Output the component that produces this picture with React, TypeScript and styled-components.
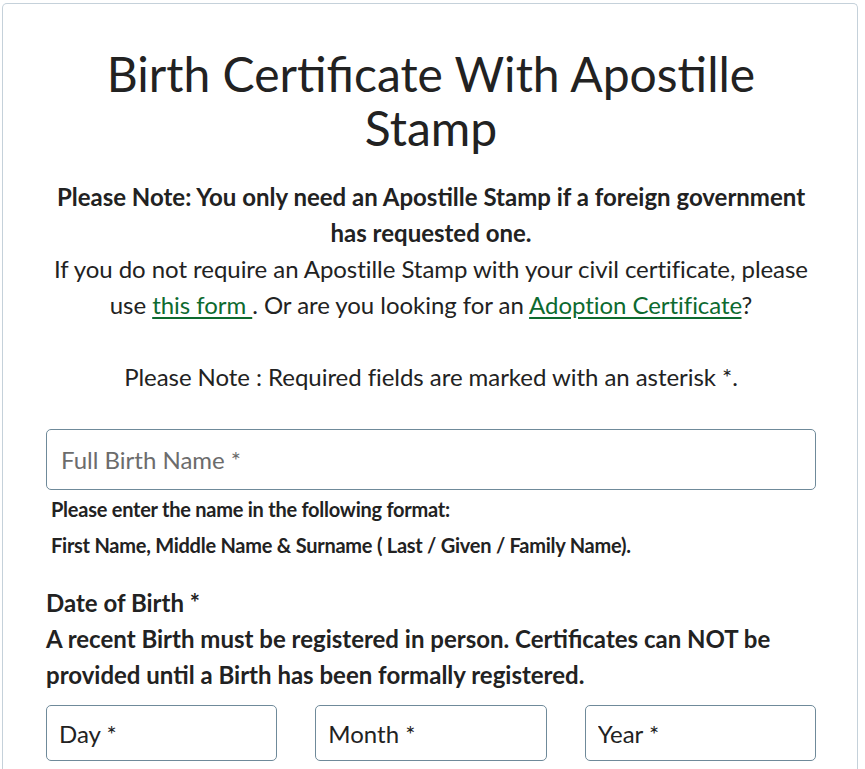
import React from "react";
import styled, { createGlobalStyle } from "styled-components";

const Global = createGlobalStyle`
  html, body { margin: 0; padding: 0; background: #fff; }
  body { font-family: Lato, "Open Sans", sans-serif; color: #212529; }
  * { box-sizing: border-box; }
`;

const Page = styled.div`
  padding: 3px 7px 0 2px;
`;

const Card = styled.div`
  border: 1px solid #c5d1da;
  border-bottom: none;
  border-radius: 5px 5px 0 0;
  padding: 43px 41px 20px 43px;
  min-height: 770px;
`;

const Title = styled.h1`
  margin: 0 0 24px;
  font-size: 48px;
  line-height: 54px;
  font-weight: 400;
  text-align: center;
  color: #222;
`;

const Intro = styled.div`
  text-align: center;
  font-size: 24px;
  line-height: 36px;
  color: #222;
`;

const Strong = styled.p`
  margin: 0;
  font-weight: 700;
`;

const Para = styled.p<{ $gapTop?: boolean }>`
  margin: ${(p) => (p.$gapTop ? "36px 0 0" : "0")};
  letter-spacing: -0.05px;
`;

const Link = styled.a`
  color: #0d6a2f;
  text-decoration: underline;
  text-underline-offset: 3px;
`;

const Field = styled.input<{ $tall?: boolean }>`
  display: block;
  width: 100%;
  height: ${(p) => (p.$tall ? "61px" : "56px")};
  border: 1px solid #6f8a9a;
  border-radius: 5px;
  padding: 0 ${(p) => (p.$tall ? "14px" : "12px")};
  font-family: Lato, sans-serif;
  font-size: 24px;
  color: #222;
  background: #fff;
  outline: none;
  &::placeholder { color: ${(p) => (p.$tall ? "#6c6c6c" : "#222")}; opacity: 1; }
`;

const NameBlock = styled.div`
  margin-top: 34px;
`;

const Hint = styled.div`
  margin-top: 1px;
  padding-left: 5px;
  font-size: 20px;
  line-height: 36px;
  font-weight: 700;
  letter-spacing: -0.25px;
  color: #222;
`;

const Section = styled.div`
  margin-top: 22px;
  font-size: 24px;
  line-height: 36px;
  font-weight: 700;
  color: #222;
`;

const DateRow = styled.div`
  display: grid;
  grid-template-columns: 1fr 1fr 1fr;
  column-gap: 38px;
  margin-top: 12px;
`;

export default function App() {
  return (
    <>
      <Global />
      <Page>
        <Card>
          <Title>Birth Certificate With Apostille Stamp</Title>
          <Intro>
            <Strong>
              Please Note: You only need an Apostille Stamp if a foreign government has requested one.
            </Strong>
            <Para>
              If you do not require an Apostille Stamp with your civil certificate, please use{" "}
              <Link href="#">this form </Link>. Or are you looking for an{" "}
              <Link href="#">Adoption Certificate</Link>?
            </Para>
            <Para $gapTop>Please Note : Required fields are marked with an asterisk *.</Para>
          </Intro>
          <NameBlock>
            <Field $tall placeholder="Full Birth Name *" />
            <Hint>
              Please enter the name in the following format:
              <br />
              First Name, Middle Name &amp; Surname ( Last / Given / Family Name).
            </Hint>
          </NameBlock>
          <Section>
            Date of Birth *
            <br />
            A recent Birth must be registered in person. Certificates can NOT be provided until a Birth has been formally registered.
          </Section>
          <DateRow>
            <Field placeholder="Day *" />
            <Field placeholder="Month *" />
            <Field placeholder="Year *" />
          </DateRow>
        </Card>
      </Page>
    </>
  );
}
